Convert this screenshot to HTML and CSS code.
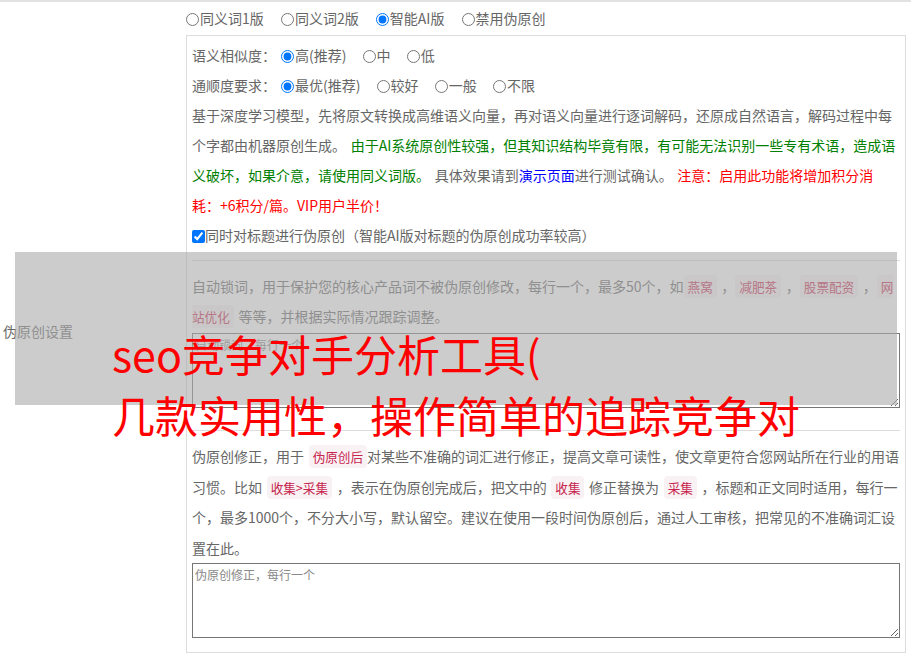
FILE: index.html
```html
<!DOCTYPE html>
<html lang="zh-CN">
<head>
<meta charset="utf-8">
<title>伪原创设置</title>
<link rel="stylesheet" href="styles.css">
</head>
<body>
<div class="page">
  <div class="row">
    <div class="label">伪原创设置</div>
    <div class="content">
      <div class="modes">
        <label class="opt"><input type="radio" name="mode">同义词1版</label>
        <label class="opt"><input type="radio" name="mode">同义词2版</label>
        <label class="opt"><input type="radio" name="mode" checked>智能AI版</label>
        <label class="opt"><input type="radio" name="mode">禁用伪原创</label>
      </div>
      <div class="box">
        <div class="line"><span class="key">语义相似度：</span><label class="opt"><input type="radio" name="sim" checked>高(推荐)</label>
          <label class="opt"><input type="radio" name="sim">中</label>
          <label class="opt"><input type="radio" name="sim">低</label></div>
        <div class="line"><span class="key">通顺度要求：</span><label class="opt"><input type="radio" name="flu" checked>最优(推荐)</label>
          <label class="opt"><input type="radio" name="flu">较好</label>
          <label class="opt"><input type="radio" name="flu">一般</label>
          <label class="opt"><input type="radio" name="flu">不限</label></div>
        <p class="desc">基于深度学习模型，先将原文转换成高维语义向量，再对语义向量进行逐词解码，还原成自然语言，解码过程中每个字都由机器原创生成。 <span class="green">由于AI系统原创性较强，但其知识结构毕竟有限，有可能无法识别一些专有术语，造成语义破坏，如果介意，请使用同义词版。</span> 具体效果请到<a class="link" href="#">演示页面</a>进行测试确认。 <span class="red">注意：启用此功能将增加积分消耗：+6积分/篇。VIP用户半价！</span></p>
        <div class="line"><label class="chk"><input type="checkbox" checked>同时对标题进行伪原创（智能AI版对标题的伪原创成功率较高）</label></div>
        <hr class="sep">
        <p class="desc">自动锁词，用于保护您的核心产品词不被伪原创修改，每行一个，最多50个，如<code>燕窝</code> ，<code>减肥茶</code> ，<code>股票配资</code> ，<code>网站优化</code> 等等，并根据实际情况跟踪调整。</p>
        <textarea class="area" placeholder="自动锁词，每行一个"></textarea>
        <hr class="sep">
        <p class="desc tall">伪原创修正，用于 <code>伪原创后</code>对某些不准确的词汇进行修正，提高文章可读性，使文章更符合您网站所在行业的用语习惯。比如 <code>收集&gt;采集</code> ，表示在伪原创完成后，把文中的 <code>收集</code> 修正替换为 <code>采集</code> ，标题和正文同时适用，每行一个，最多1000个，不分大小写，默认留空。建议在使用一段时间伪原创后，通过人工审核，把常见的不准确词汇设置在此。</p>
        <textarea class="area last" placeholder="伪原创修正，每行一个"></textarea>
      </div>
    </div>
  </div>
  <div class="overlay"><h1 class="title">seo竞争对手分析工具(<br>几款实用性，操作简单的追踪竞争对</h1></div>
</div>
</body>
</html>
```
FILE: styles.css
```css
body {
  margin: 0;
  font-family: "Noto Sans CJK SC", "Microsoft YaHei", sans-serif;
  font-size: 14px;
  color: #666;
}
.page {
  position: relative;
  border-top: 2px solid #e2e2e2;
}
.row {
  display: flex;
}
.label {
  width: 183px;
  padding-left: 3px;
  display: flex;
  align-items: center;
}
.content {
  width: 720px;
  padding-top: 1px;
  padding-bottom: 6px;
}
.modes {
  height: 30px;
  line-height: 30px;
  white-space: nowrap;
}
.opt {
  margin-right: 13px;
}
.modes .opt {
  margin-right: 14px;
}
.opt input {
  margin: 0 1px 0 0;
  width: 13px;
  height: 13px;
  vertical-align: -2px;
}
.box {
  margin-top: 2px;
  border: 1px solid #ddd;
  padding: 4px 5px 5px;
}
.line {
  height: 30px;
  line-height: 30px;
  white-space: nowrap;
}
.key {
  margin-right: 5px;
}
.desc {
  margin: 0;
  line-height: 30px;
  word-spacing: 1.5px;
}
.tall {
  line-height: 30.5px;
}
.green {
  color: #008000;
}
.red {
  color: #ff0000;
}
.link {
  color: #0000ff;
  text-decoration: none;
}
.chk input {
  margin: 0;
  width: 13px;
  height: 13px;
  vertical-align: -2px;
}
.sep {
  border: 0;
  border-top: 1px solid #ddd;
  margin: 10px 0;
}
code {
  font-family: "Noto Sans CJK SC", sans-serif;
  font-size: 90%;
  line-height: 1;
  color: #c7254e;
  background: #f9f2f4;
  padding: 2px 4px;
  border-radius: 4px;
}
.area {
  display: block;
  box-sizing: border-box;
  width: 100%;
  height: 75px;
  margin: 2px 0 22px;
  padding: 2px;
  border: 1px solid #767676;
  font-family: "Noto Sans CJK SC", sans-serif;
  font-size: 12px;
}
.area::placeholder {
  color: #888;
}
.last {
  margin: 0 0 9px;
}
.overlay {
  position: absolute;
  left: 15px;
  top: 250px;
  width: 882px;
  height: 153px;
  background: rgba(170, 170, 170, 0.6);
}
.title {
  margin: 0;
  padding: 71px 0 0 97px;
  font-size: 43px;
  line-height: 61px;
  font-weight: normal;
  color: #ff0000;
  white-space: nowrap;
}
```
